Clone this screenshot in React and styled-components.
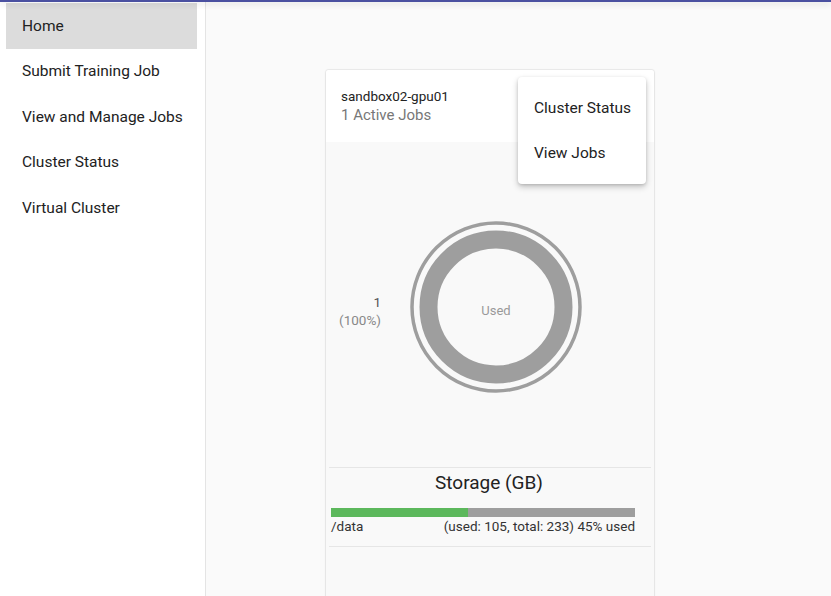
import React from "react";
import styled, { createGlobalStyle } from "styled-components";

const Global = createGlobalStyle`
  html, body { margin: 0; padding: 0; }
  body { font-family: Roboto, "Noto Sans", sans-serif; background: #fafafa; overflow: hidden; }
`;

const Page = styled.div`
  position: relative;
  display: flex;
  width: 831px;
  height: 596px;
  background: #fafafa;
  overflow: hidden;
`;

const TopEdge = styled.div`
  position: absolute;
  top: 0; left: 0; right: 0;
  height: 2px;
  background: #4a50a0;
  box-shadow: 0 2px 6px rgba(0,0,0,0.18);
  z-index: 5;
`;

const Sidebar = styled.nav`
  width: 206px;
  flex: none;
  background: #fff;
  border-right: 1px solid #e4e4e4;
  padding: 3px 8px 0 6px;
  box-sizing: border-box;
  display: flex;
  flex-direction: column;
`;

const NavItem = styled.div`
  height: 45.5px;
  display: flex;
  align-items: center;
  padding-left: 16px;
  font-size: 15.5px;
  color: #222;
  background: ${p => (p.$active ? "#dcdcdc" : "transparent")};
`;

const Main = styled.main`
  flex: 1;
  padding: 70px 0 0 120px;
  box-sizing: border-box;
`;

const Card = styled.section`
  position: relative;
  width: 328px;
  height: 540px;
  background: #f9f9f9;
  border-radius: 3px;
  box-shadow: 0 0 1px 1px rgba(0,0,0,0.07), 0 1px 3px rgba(0,0,0,0.05);
  display: flex;
  flex-direction: column;
`;

const CardHeader = styled.header`
  background: #fff;
  height: 72px;
  padding: 17px 15px 0;
  box-sizing: border-box;
  border-radius: 3px 3px 0 0;
`;

const HostName = styled.div`
  font-size: 13.5px;
  color: #222;
  line-height: 18px;
`;

const SubTitle = styled.div`
  font-size: 15px;
  color: #777;
  line-height: 22px;
  margin-top: -1px;
`;

const ChartArea = styled.div`
  position: relative;
  height: 325px;
  display: flex;
  align-items: center;
  justify-content: center;
  padding: 4px 0 0 12px;
  box-sizing: border-box;
`;

const SideLabel = styled.div`
  position: absolute;
  left: 0;
  width: 55px;
  top: 151px;
  text-align: right;
  font-size: 13.5px;
  line-height: 18px;
  color: #555;
`;

const SideLabelSub = styled.div`
  color: #888;
`;

const Divider = styled.hr`
  margin: 0 3px;
  border: none;
  border-top: 1px solid #e6e6e6;
`;

const Storage = styled.div`
  padding: 3px 19px 11px 5px;
`;

const StorageTitle = styled.div`
  text-align: center;
  font-size: 19px;
  color: #222;
  line-height: 24px;
  margin-bottom: 13px;
  padding-left: 12px;
`;

const Bar = styled.div`
  height: 9px;
  background: #9e9e9e;
  display: flex;
`;

const BarFill = styled.div`
  background: #5cb85c;
  height: 100%;
`;

const BarLegend = styled.div`
  display: flex;
  justify-content: space-between;
  font-size: 13.5px;
  color: #333;
  line-height: 18px;
`;

const Menu = styled.div`
  position: absolute;
  top: 7px;
  left: 192px;
  width: 128px;
  background: #fff;
  border-radius: 4px;
  box-shadow: 0 3px 6px rgba(0,0,0,0.22), 0 1px 3px rgba(0,0,0,0.12);
  padding: 8px 0;
  z-index: 3;
`;

const MenuItem = styled.div`
  height: 45.5px;
  display: flex;
  align-items: center;
  padding-left: 16px;
  font-size: 15.5px;
  color: #222;
`;

const Donut = () => (
  <svg width="176" height="176" viewBox="0 0 176 176">
    <circle cx="88" cy="88" r="84" fill="none" stroke="#9e9e9e" strokeWidth="3.5" />
    <circle cx="88" cy="88" r="67.5" fill="none" stroke="#9e9e9e" strokeWidth="18" />
    <text x="88" y="96" textAnchor="middle" fontSize="13" fill="#999" fontFamily="Roboto, sans-serif">Used</text>
  </svg>
);

export default function App() {
  const used = 105, total = 233;
  const pct = Math.round((used / total) * 100);
  return (
    <Page>
      <Global />
      <TopEdge />
      <Sidebar>
        <NavItem $active>Home</NavItem>
        <NavItem>Submit Training Job</NavItem>
        <NavItem>View and Manage Jobs</NavItem>
        <NavItem>Cluster Status</NavItem>
        <NavItem>Virtual Cluster</NavItem>
      </Sidebar>
      <Main>
        <Card>
          <CardHeader>
            <HostName>sandbox02-gpu01</HostName>
            <SubTitle>1 Active Jobs</SubTitle>
          </CardHeader>
          <ChartArea>
            <SideLabel>
              1
              <SideLabelSub>(100%)</SideLabelSub>
            </SideLabel>
            <Donut />
          </ChartArea>
          <Divider />
          <Storage>
            <StorageTitle>Storage (GB)</StorageTitle>
            <Bar>
              <BarFill style={{ width: `${(used / total) * 100}%` }} />
            </Bar>
            <BarLegend>
              <span>/data</span>
              <span>(used: {used}, total: {total}) {pct}% used</span>
            </BarLegend>
          </Storage>
          <Divider />
          <Menu>
            <MenuItem>Cluster Status</MenuItem>
            <MenuItem>View Jobs</MenuItem>
          </Menu>
        </Card>
      </Main>
    </Page>
  );
}
